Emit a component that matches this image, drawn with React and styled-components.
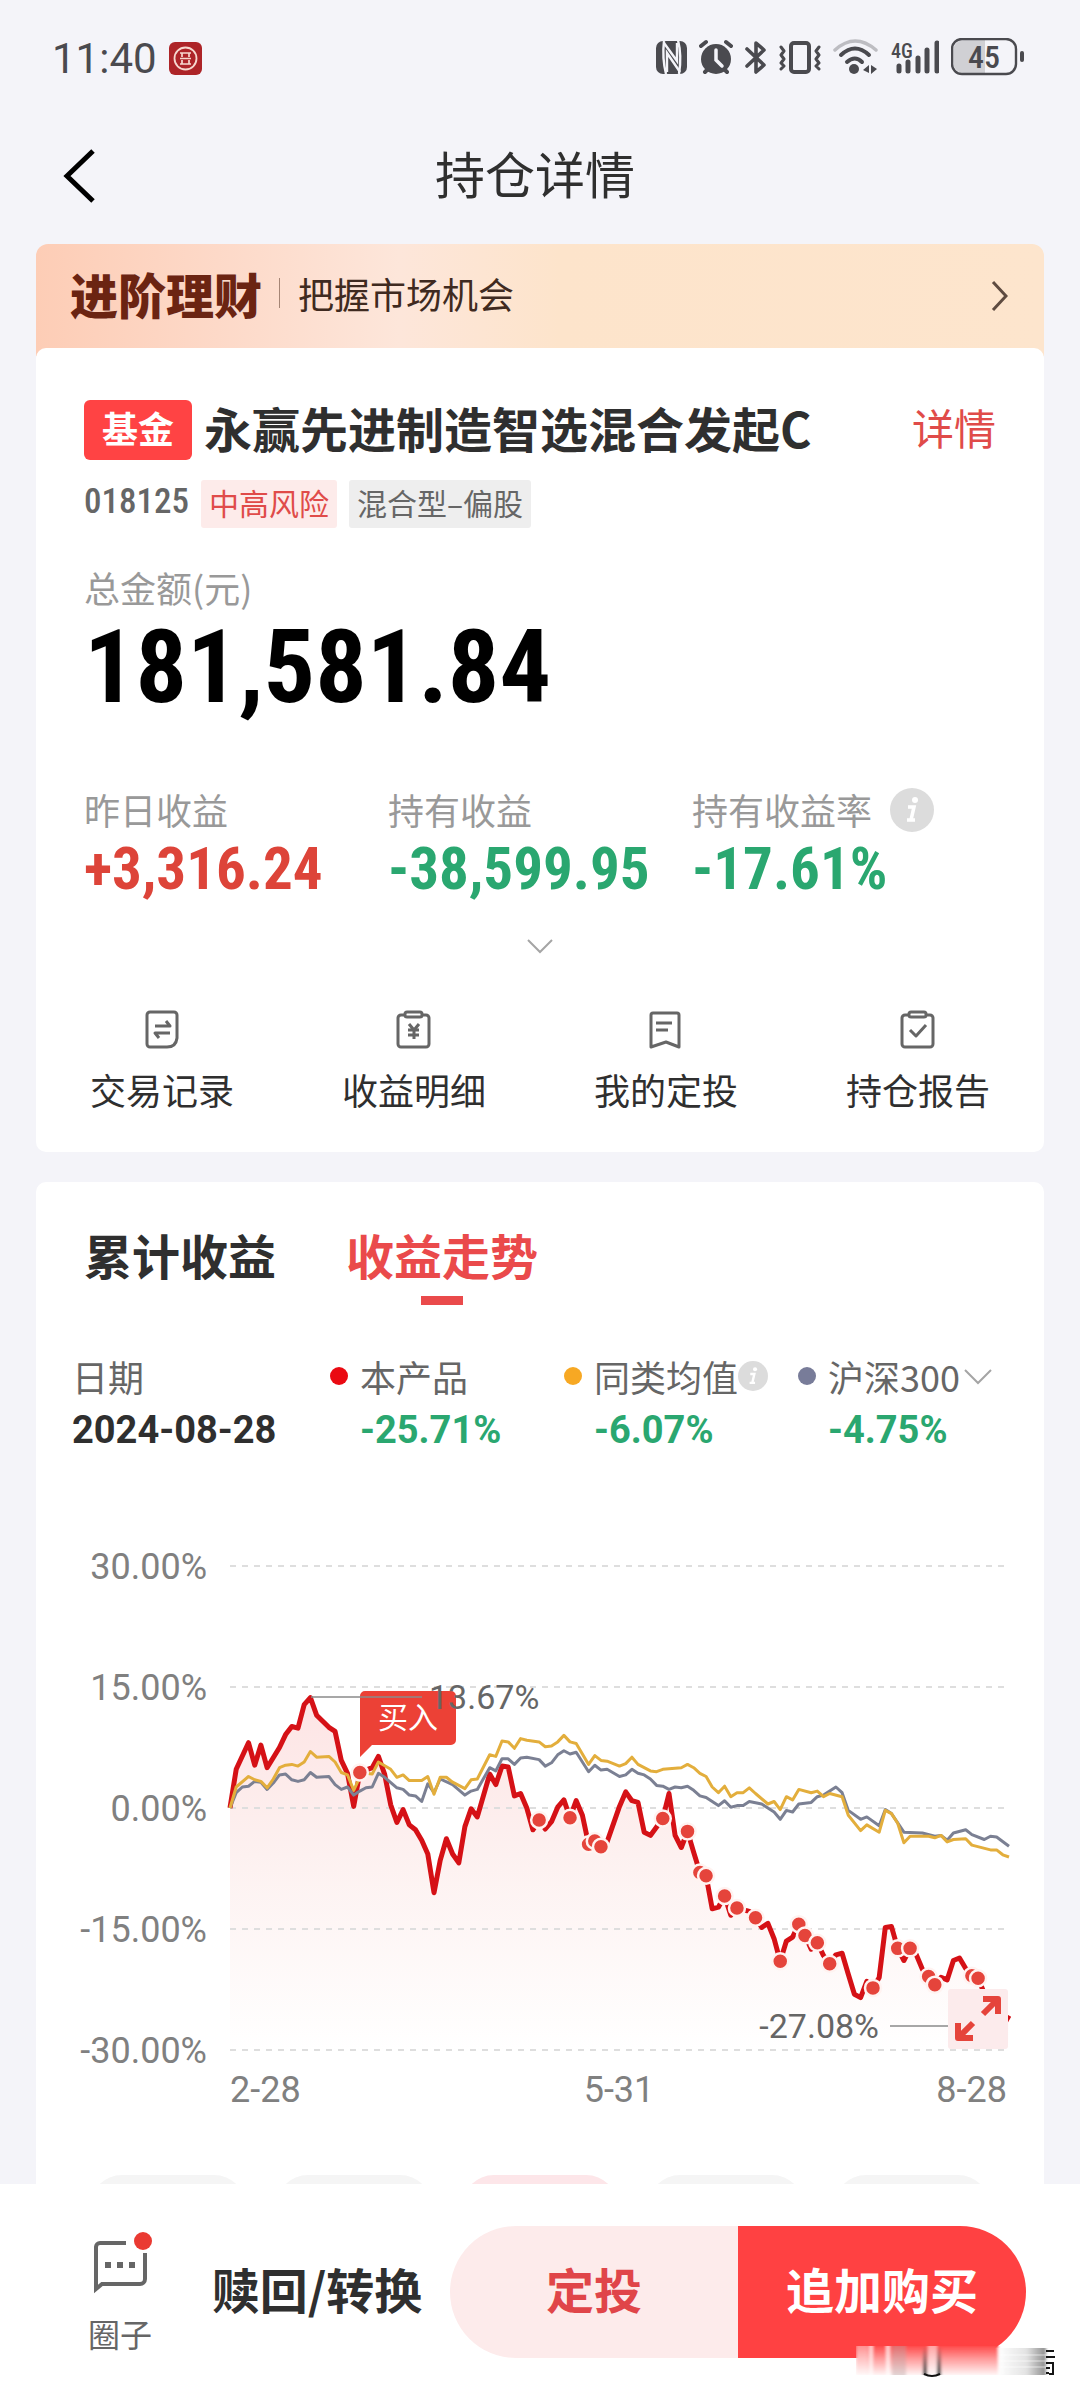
import React, { useState } from 'react';
import styled, { createGlobalStyle } from 'styled-components';

// DATA
const STATS = [
	{ label: '昨日收益', value: '+3,316.24', color: '#dd4439' },
	{ label: '持有收益', value: '-38,599.95', color: '#2aa770' },
	{ label: '持有收益率', value: '-17.61%', color: '#2aa770', info: true },
];

const TABS = ['累计收益', '收益走势'];

const LAST_DAY = 126;

// [trading day, percent]
const PRODUCT = [
	[0, 0], [1, 4.8], [3, 8.1], [4, 5.3], [5, 7.8], [6, 5], [8, 7.5], [9, 9.1],
	[10, 10.1], [11, 9.9], [12, 12.8], [13, 13.67], [14, 11.5], [16, 10],
	[17, 9.5], [18, 5.9], [19, 4.3], [20, 0.2], [21, 4.4], [23, 5], [24, 6.4],
	[25, 4.2], [26, 0.4], [27, -1.8], [28, -0.2], [29, -2.1], [30, -2.7],
	[31, -4], [32, -5.7], [33, -10.5], [34, -6.5], [35, -3.8], [36, -5.7],
	[37, -6.8], [38, -2.3], [39, -0.1], [40, -1.1], [42, 4.2], [43, 2.9],
	[44, 5.2], [45, 5.1], [46, 1.5], [47, 1.8], [48, 0], [49, -2.7],
	[50, -1.5], [51, -2.6], [52, -1.7], [53, 0.1], [54, 1], [55, -1.2],
	[56, 0.9], [57, -0.9], [58, -4.5], [59, -4.1], [60, -4.8], [61, -4.2],
	[63, 0.2], [64, 2], [65, 0.9], [66, 0.7], [67, -3], [68, -3.4],
	[70, -1.3], [71, 1.8], [72, -3.4], [73, -4.9], [74, -2.9], [75, -5.5],
	[76, -8], [77, -8.4], [78, -12.5], [79, -12.3], [80, -10.9], [81, -13.3],
	[82, -12.4], [84, -12.8], [85, -13.6], [86, -14.8], [87, -14.3],
	[88, -16.2], [89, -19], [90, -16.5], [91, -16], [92, -14.4], [93, -15.8],
	[94, -17.5], [95, -16.7], [96, -18.3], [97, -19.3], [98, -18.2],
	[99, -18], [100, -20.6], [101, -23.1], [102, -23.5], [103, -21.5],
	[104, -22.3], [105, -21], [106, -14.8], [107, -14.7], [108, -17.4],
	[109, -18.9], [110, -17.4], [111, -18.2], [112, -20], [113, -20.9],
	[114, -21.9], [115, -21], [116, -21.3], [117, -18.9], [118, -18.6],
	[119, -19.9], [120, -20.8], [121, -21.1], [122, -23], [123, -24.5],
	[124, -25.5], [125, -27.08], [126, -25.71],
];

const AVERAGE = [
	[0, 0], [1, 2.6], [3, 3.9], [4, 3.5], [5, 3.3], [6, 2.5], [7, 3.6], [8, 5],
	[9, 5.3], [10, 5.4], [11, 5.2], [12, 5.7], [13, 7], [14, 6.3], [16, 6.4],
	[17, 5.7], [18, 4.4], [19, 4.1], [20, 2.2], [21, 3.8], [22, 4.3],
	[23, 4.2], [24, 5.7], [26, 4.8], [27, 3.8], [28, 4.1], [29, 3.4],
	[31, 3.4], [32, 3.9], [33, 1.7], [34, 3.8], [35, 3.8], [36, 3.2],
	[37, 2.8], [38, 2.4], [39, 3.5], [40, 3.6], [42, 6.6], [43, 6.4],
	[44, 8.3], [45, 8.2], [46, 7.4], [47, 8.6], [48, 8.4], [50, 8.2],
	[51, 7.6], [52, 7.7], [53, 8.2], [54, 9], [55, 8.2], [56, 8], [58, 5.4],
	[59, 6.5], [60, 5.9], [61, 5.8], [63, 5.2], [64, 5.5], [65, 6.3],
	[66, 5.4], [68, 4.6], [69, 4.5], [70, 4.8], [73, 5], [74, 5.4], [75, 5],
	[76, 4.3], [77, 3.9], [78, 2.6], [79, 1.9], [80, 2.7], [81, 1.4],
	[82, 1.9], [83, 1.9], [84, 2.5], [85, 1.8], [87, 0.5], [88, 0.8],
	[89, -0.2], [90, 1.4], [91, 1], [92, 2.3], [94, 1.9], [95, 2.1],
	[96, 1.4], [97, 1.8], [99, 1.4], [100, -0.9], [102, -2.8], [103, -2.1],
	[105, -3], [106, -0.3], [107, -0.7], [108, -1.9], [109, -4.3],
	[110, -3.5], [113, -3.5], [114, -3.7], [115, -3.4], [116, -4.2],
	[117, -3.9], [119, -3.8], [120, -4.6], [123, -5.2], [124, -5.2],
	[125, -5.8], [126, -6.07],
];

const CSI300 = [
	[0, 0], [1, 1.9], [2, 2.6], [3, 2.7], [4, 3.3], [5, 3.2], [6, 2.3],
	[7, 3.1], [8, 4.1], [9, 4.2], [10, 3.5], [11, 3.3], [12, 3.5], [13, 4.4],
	[14, 3.8], [16, 3.9], [17, 2.9], [18, 2.3], [19, 2.6], [20, 1.6],
	[21, 2.1], [22, 2.5], [23, 2.6], [24, 4.3], [25, 3.8], [27, 2.5],
	[28, 2.3], [29, 1.6], [30, 1.5], [31, 0.8], [32, 3], [33, 1.9],
	[34, 3.6], [36, 2.9], [38, 1.6], [39, 2.1], [40, 2.3], [42, 5],
	[43, 4.6], [44, 6.1], [45, 6.1], [46, 5.4], [47, 6.2], [48, 6.3],
	[50, 6], [51, 5.2], [52, 5.6], [53, 6.6], [54, 7.1], [55, 6.7],
	[56, 6.9], [58, 4.5], [59, 5.3], [60, 4.7], [61, 4.8], [63, 3.9],
	[64, 4.1], [65, 4.8], [66, 4.3], [67, 4.1], [68, 3.6], [69, 2.8],
	[70, 2.7], [71, 2.3], [72, 2.6], [73, 2.5], [74, 2.7], [75, 2.2],
	[76, 1.5], [77, 1.3], [79, 0.3], [80, 0.9], [81, 0.1], [82, 0.3],
	[83, 0.3], [84, 0.8], [86, 0.5], [88, -0.5], [89, -1.4], [90, -0.3],
	[91, -0.5], [92, 0.5], [94, 0.7], [95, 1.4], [96, 1.6], [98, 2.6],
	[99, 1.9], [100, -0.3], [102, -1.4], [103, -1.1], [105, -2.2],
	[106, -0.2], [107, -0.7], [109, -3], [112, -3.1], [114, -3.5],
	[115, -3.4], [116, -4], [117, -3.1], [119, -2.7], [120, -3.3],
	[122, -3.9], [123, -3.5], [124, -3.6], [126, -4.75],
];

const BUY_DAYS = [
	21, 50, 55, 58, 59, 60, 70, 74, 76, 77, 80, 82, 85, 89, 92, 93, 95, 97,
	104, 108, 110, 113, 114, 120, 121,
];

const GRID = [30, 15, 0, -15, -30];

const LEFT = 194;
const RIGHT = 973;
const toX = (day) => LEFT + (day / LAST_DAY) * (RIGHT - LEFT);
const toY = (pct) => 308 - (pct * 121) / 15;
const toPoints = (series) =>
	series.map(([d, p]) => `${toX(d).toFixed(1)},${toY(p).toFixed(1)}`).join(' ');

// ICONS
const INK = '#4a4a4f';

function StatusIcons() {
	return (
		<StatusGroup>
			<svg width="31" height="40" viewBox="0 0 31 40">
				<rect y="3" width="31" height="33" rx="7" fill={INK} />
				<g fill="none" stroke="#f4f4f9" strokeWidth="2.4">
					<path d="M8 3Q6 20 10 36" />
					<path d="M8 5L21 23V5" />
					<path d="M11 34V15l13 19" />
					<path d="M22 2q4 16 1 34" />
				</g>
			</svg>
			<svg width="34" height="40" viewBox="0 0 34 40">
				<circle cx="17" cy="21" r="15" fill={INK} />
				<path d="M2 8l5-4M32 8l-5-4M6 34l4-4M28 34l-4-4" stroke={INK} strokeWidth="4" strokeLinecap="round" />
				<path d="M17 12v10l6 6" fill="none" stroke="#f4f4f9" strokeWidth="3.5" strokeLinecap="round" />
			</svg>
			<svg width="22" height="40" viewBox="0 0 22 40">
				<path d="M2 11l17 16-8 7V5l8 7L2 28" fill="none" stroke={INK} strokeWidth="3.6" strokeLinecap="round" strokeLinejoin="round" />
			</svg>
			<svg width="42" height="40" viewBox="0 0 42 40" fill="none" stroke={INK} strokeLinecap="round" strokeLinejoin="round">
				<rect x="12" y="5" width="18" height="29" rx="3" strokeWidth="4" />
				<path d="M2 9l3 4-3 4 3 4-3 4 3 3-3 3M40 9l-3 4 3 4-3 4 3 4-3 3 3 3" strokeWidth="3" />
			</svg>
			<svg width="45" height="40" viewBox="0 0 45 40" fill="none" strokeLinecap="round">
				<path d="M2 12Q22-6 43 12" stroke="#bdbdc2" strokeWidth="3.5" />
				<path d="M8 17Q22 4 36 17M14 24q8-7 15 0" stroke={INK} strokeWidth="4" />
				<circle cx="21" cy="31" r="5" fill={INK} />
				<path d="M36 27v8l-6-3zM38 27v9l6-5z" fill={INK} />
			</svg>
			<svg width="49" height="40" viewBox="0 0 49 40">
				<StatusText x="1" y="20" $size={20}>4G</StatusText>
				<path d="M9 28v5M18 24v9M28 20v13M37 12v21M47 5v28" stroke={INK} strokeWidth="5" strokeLinecap="round" />
			</svg>
			<svg width="73" height="40" viewBox="0 0 73 40">
				<path d="M34 2H13A11 11 0 0 0 2 13v11a11 11 0 0 0 11 11h21z" fill="#d0d0d4" />
				<rect x="1" y="1" width="64" height="35" rx="10" fill="none" stroke={INK} strokeWidth="2.4" />
				<rect x="69" y="13" width="4" height="11" rx="2" fill={INK} />
				<StatusText x="33" y="30" textAnchor="middle" $size={32}>45</StatusText>
			</svg>
		</StatusGroup>
	);
}

function BankLogo() {
	return (
		<svg width="33" height="33" viewBox="0 0 33 33">
			<rect width="33" height="33" rx="6" fill="#ad2428" />
			<circle cx="16.5" cy="16.5" r="11" fill="none" stroke="#f6d8cf" strokeWidth="1.8" />
			<path d="M11 11h11M11 22h11M11 16.5h11M13 11v4M20 11v4M13 18v4M20 18v4" fill="none" stroke="#f6d8cf" strokeWidth="1.7" />
		</svg>
	);
}

function InfoIcon({ size }) {
	return (
		<svg width={size} height={size} viewBox="0 0 44 44">
			<circle cx="22" cy="22" r="22" fill="#dcdcdc" />
			<circle cx="25" cy="12" r="3" fill="#fff" />
			<path d="M18 19h6l-3 13m-4 0h8" fill="none" stroke="#fff" strokeWidth="3.5" />
		</svg>
	);
}

function Chevron({ d, width, height, color, weight }) {
	return (
		<svg width={width} height={height} viewBox={`0 0 ${width} ${height}`}>
			<path d={d} fill="none" stroke={color} strokeWidth={weight} />
		</svg>
	);
}

const ACTIONS = [
	{
		label: '交易记录',
		icon: (
			<>
				<path d="M10 4h24a3 3 0 0 1 3 3v23q-1 9-10 9H10a3 3 0 0 1-3-3V7a3 3 0 0 1 3-3z" />
				<path d="M15 18h15l-4-5M30 25H15l4 5" />
			</>
		),
	},
	{
		label: '收益明细',
		icon: (
			<>
				<path d="M13 7H9a3 3 0 0 0-3 3v26a3 3 0 0 0 3 3h25a3 3 0 0 0 3-3V10a3 3 0 0 0-3-3h-4" />
				<rect x="13" y="4" width="17" height="5" rx="2" />
				<path d="M17 16l5 6 5-6M22 22v9M16 22h11M16 27h11" />
			</>
		),
	},
	{
		label: '我的定投',
		icon: (
			<>
				<path d="M9 5h24a2 2 0 0 1 2 2v32l-13-5-15 5V7a2 2 0 0 1 2-2z" />
				<path d="M12 15h16M12 22h12" />
			</>
		),
	},
	{
		label: '持仓报告',
		icon: (
			<>
				<path d="M13 7H9a3 3 0 0 0-3 3v26a3 3 0 0 0 3 3h25a3 3 0 0 0 3-3V10a3 3 0 0 0-3-3h-4" />
				<rect x="13" y="4" width="17" height="5" rx="2" />
				<path d="M14 22l6 6 10-11" />
			</>
		),
	},
];

function TrendChart() {
	const product = toPoints(PRODUCT);
	const values = new Map(PRODUCT);

	return (
		<ChartSvg viewBox="0 0 1008 620">
			<defs>
				<linearGradient id="area" x1="0" y1="196" x2="0" y2="550" gradientUnits="userSpaceOnUse">
					<stop offset="0" stopColor="#fde4e4" />
					<stop offset="0.45" stopColor="#fdf1f0" />
					<stop offset="1" stopColor="#ffffff" />
				</linearGradient>
			</defs>
			<polygon points={`${LEFT},550 ${product} ${RIGHT},550`} fill="url(#area)" />
			{GRID.map((pct) => (
				<g key={pct}>
					<line x1={LEFT} x2={RIGHT - 3} y1={toY(pct)} y2={toY(pct)} stroke="#dedede" strokeWidth="2" strokeDasharray="6 6" />
					<AxisText x="171" y={toY(pct) + 13} textAnchor="end">
						{`${pct.toFixed(2)}%`}
					</AxisText>
				</g>
			))}
			<AxisText x="194" y="602">2-28</AxisText>
			<AxisText x="583" y="602" textAnchor="middle">5-31</AxisText>
			<AxisText x="971" y="602" textAnchor="end">8-28</AxisText>

			<Series points={product} stroke="#d51116" $width={5} />
			<Series points={toPoints(CSI300)} stroke="#7b8093" $width={3} />
			<Series points={toPoints(AVERAGE)} stroke="#e3ae3c" $width={3} />
			{BUY_DAYS.map((day) => (
				<circle key={day} cx={toX(day)} cy={toY(values.get(day))} r="8" fill="#e5443b" stroke="#fff3f1" strokeWidth="2.5" />
			))}

			{/* buy marker */}
			<path d="M324 257V196a5 5 0 0 1 5-5h86a5 5 0 0 1 5 5v44a5 5 0 0 1-5 5h-79z" fill="#ec4136" />
			<BuyText x="372" y="228" textAnchor="middle">买入</BuyText>

			{/* high and low */}
			<path d="M275 197h111M854 526h58" stroke="#8b8b8b" strokeWidth="1.5" />
			<PeakText x="393" y="209">13.67%</PeakText>
			<PeakText x="843" y="538" textAnchor="end">-27.08%</PeakText>

			{/* fullscreen */}
			<rect x="912" y="489" width="60" height="60" rx="3" fill="#fcebec" />
			<path d="M947 514l15-15M947 499h15v15M937 523l-15 15M922 523v15h15" fill="none" stroke="#e5443b" strokeWidth="6" strokeLinejoin="round" />
		</ChartSvg>
	);
}

function App() {
	const [activeTab, setActiveTab] = useState(TABS[1]);

	return (
		<Page>
			<GlobalStyle />
			<StatusBar>
				<Clock>11:40</Clock>
				<BankLogo />
				<StatusIcons />
			</StatusBar>
			<Header>
				<BackButton type="button">
					<Chevron d="M33 3L7 28l26 25" width={36} height={56} color="#000" weight={5} />
				</BackButton>
				<PageTitle>持仓详情</PageTitle>
			</Header>

			<Content>
				<Banner href="#">
					<BannerTitle>进阶理财</BannerTitle>
					<BannerText>把握市场机会</BannerText>
					<Chevron d="M3 2l13 14L3 30" width={18} height={32} color="#5e4b40" weight={3} />
				</Banner>

				<HoldingCard>
					<FundRow>
						<FundBadge>基金</FundBadge>
						<FundName>永赢先进制造智选混合发起C</FundName>
						<DetailLink href="#">详情</DetailLink>
					</FundRow>
					<TagRow>
						<FundCode>018125</FundCode>
						<Tag $risk>中高风险</Tag>
						<Tag>混合型–偏股</Tag>
					</TagRow>
					<Label $top={38}>总金额(元)</Label>
					<Amount>181,581.84</Amount>
					<StatGrid>
						{STATS.map((stat) => (
							<div key={stat.label}>
								<Label>
									{stat.label}
									{stat.info && <InfoIcon size={44} />}
								</Label>
								<StatValue $color={stat.color}>{stat.value}</StatValue>
							</div>
						))}
					</StatGrid>
					<MoreButton type="button">
						<Chevron d="M1 2l12 12L25 2" width={26} height={16} color="#a5a5a5" weight={2} />
					</MoreButton>
					<ActionGrid>
						{ACTIONS.map((action) => (
							<ActionButton key={action.label} type="button">
								<ActionIcon viewBox="0 0 44 44">{action.icon}</ActionIcon>
								{action.label}
							</ActionButton>
						))}
					</ActionGrid>
				</HoldingCard>

				<TrendCard>
					<Tabs>
						{TABS.map((tab) => (
							<Tab key={tab} type="button" $active={tab === activeTab} onClick={() => setActiveTab(tab)}>
								{tab}
							</Tab>
						))}
					</Tabs>
					<Legend>
						<LegendItem>
							<LegendLabel as="span">日期</LegendLabel>
							<LegendValue $color="#2f2f2f">2024-08-28</LegendValue>
						</LegendItem>
						<LegendItem>
							<LegendLabel as="span">
								<Dot $color="#ea0a12" />
								本产品
							</LegendLabel>
							<LegendValue $indent>-25.71%</LegendValue>
						</LegendItem>
						<LegendItem>
							<LegendLabel as="span">
								<Dot $color="#f7a823" />
								同类均值
								<InfoIcon size={30} />
							</LegendLabel>
							<LegendValue $indent>-6.07%</LegendValue>
						</LegendItem>
						<LegendItem>
							<LegendLabel htmlFor="benchmark">
								<Dot $color="#787c99" />
								<BenchmarkSelect id="benchmark">
									<option>沪深300</option>
								</BenchmarkSelect>
								<Chevron d="M1 2l13 13L27 2" width={28} height={17} color="#a5a5a5" weight={2} />
							</LegendLabel>
							<LegendValue $indent>-4.75%</LegendValue>
						</LegendItem>
					</Legend>
					<TrendChart />
					<PeriodRow>
						<Period />
						<Period />
						<Period $active />
						<Period />
						<Period />
					</PeriodRow>
				</TrendCard>
			</Content>

			<BottomBar>
				<CircleButton type="button">
					<svg width="64" height="64" viewBox="0 0 64 64">
						<path d="M38 11H12a4 4 0 0 0-4 4v42l6-5h38a5 5 0 0 0 5-5V21" fill="none" stroke="#666" strokeWidth="4" />
						<path d="M17 30h6v6h-6zM29 30h6v6h-6zM41 30h6v6h-6z" fill="#666" />
						<circle cx="55" cy="9" r="9" fill="#ea3a32" />
					</svg>
					圈子
				</CircleButton>
				<RedeemButton type="button">赎回/转换</RedeemButton>
				<PayGroup>
					<PayButton type="button">定投</PayButton>
					<PayButton type="button" $primary>
						追加购买
					</PayButton>
				</PayGroup>
				<Smudge viewBox="0 0 204 36">
					<defs>
						<linearGradient id="fade" x1="0" y1="0" x2="0" y2="1">
							<stop offset="0" stopColor="#ff4b4b" />
							<stop offset="0.45" stopColor="#ff9c9c" />
							<stop offset="1" stopColor="#fff5f5" />
						</linearGradient>
						<linearGradient id="grey" x1="0" y1="0" x2="1" y2="0">
							<stop offset="0" stopColor="#fff" />
							<stop offset="0.6" stopColor="#e2e2e2" />
							<stop offset="1" stopColor="#8c8c8c" />
						</linearGradient>
						<linearGradient id="ends" x1="0" y1="0" x2="0" y2="1">
							<stop offset="0" stopColor="#333" stopOpacity="0" />
							<stop offset="1" stopColor="#222" />
						</linearGradient>
						<filter id="soft" x="-5%" y="-5%" width="110%" height="110%">
							<feGaussianBlur stdDeviation="1.5 0.5" />
						</filter>
					</defs>
					<g filter="url(#soft)">
						<rect y="2" width="142" height="29" fill="url(#fade)" />
						<rect y="2" width="12" height="29" fill="#fff" opacity="0.4" />
						<rect x="36" y="2" width="14" height="29" fill="#b9a6a6" opacity="0.4" />
						<path d="M15 2v29M32 2v29" stroke="#fff" strokeWidth="4" opacity="0.7" />
						<rect x="142" y="4" width="48" height="27" fill="url(#grey)" />
						<path d="M142 11h48M142 17h48M142 23h48" stroke="#fff" strokeWidth="1.5" opacity="0.4" />
						<rect x="72" y="2" width="9" height="29" fill="#fff" opacity="0.5" />
						<rect x="67" y="2" width="4" height="29" fill="url(#ends)" />
						<rect x="81" y="2" width="4" height="29" fill="url(#ends)" />
					</g>
					<path d="M68 30q8 4 16 0" fill="none" stroke="#111" strokeWidth="2" />
					<path d="M190 7h8M190 13h9M190 19h7v11h-4M190 24h4M190 29h3" fill="none" stroke="#151515" strokeWidth="2" />
				</Smudge>
			</BottomBar>
		</Page>
	);
}

export default App;

// STYLES
const GlobalStyle = createGlobalStyle`
	* {
		box-sizing: border-box;
	}

	body {
		margin: 0;
		background-color: #f4f4f9;
		color: #2f2f2f;
		font-family: 'Noto Sans CJK SC', sans-serif;
		font-size: 36px;
	}

	button,
	select {
		margin: 0;
		padding: 0;
		border: 0;
		background: none;
		color: inherit;
		font: inherit;
		cursor: pointer;
	}

	a {
		color: inherit;
		text-decoration: none;
	}

	svg {
		display: block;
		flex-shrink: 0;
	}
`;

const Page = styled.div`
	display: flex;
	flex-direction: column;
	height: 100vh;
`;

const StatusBar = styled.div`
	display: flex;
	flex-shrink: 0;
	align-items: center;
	gap: 12px;
	height: 116px;
	padding: 0 56px 0 52px;
`;

const Clock = styled.span`
	font-family: Roboto, sans-serif;
	font-size: 42px;
	color: #4a4a4f;
`;

const StatusGroup = styled.div`
	display: flex;
	align-items: center;
	gap: 12px;
	margin-left: auto;
`;

const StatusText = styled.text`
	fill: ${INK};
	font-family: 'Roboto Condensed', Roboto, sans-serif;
	font-size: ${({ $size }) => $size}px;
	font-weight: 500;
`;

const Header = styled.header`
	display: grid;
	flex-shrink: 0;
	grid-template-columns: 80px 1fr 90px;
	align-items: center;
	height: 120px;
	padding: 0 60px;
`;

const BackButton = styled.button`
	justify-self: start;
`;

const PageTitle = styled.h1`
	margin: 0;
	padding-bottom: 8px;
	font-size: 50px;
	font-weight: 400;
	line-height: 72px;
	text-align: center;
`;

const Content = styled.main`
	flex: 1;
	min-height: 0;
	padding: 8px 36px 0;
	overflow-y: auto;
	scrollbar-width: none;
`;

const Banner = styled.a`
	display: flex;
	align-items: center;
	height: 112px;
	padding: 0 36px 8px 34px;
	border-radius: 12px 12px 0 0;
	background: linear-gradient(90deg, #fdcdb6 0%, #fdd9c8 18%, #fde6da 36%, #fde4cb 52%, #fde5cd 100%);

	svg {
		margin-left: auto;
	}
`;

const BannerTitle = styled.strong`
	padding: 0 17px 6px 0;
	font-size: 48px;
	font-weight: 900;
	color: #6b2412;
`;

const BannerText = styled.span`
	display: flex;
	align-items: center;
	gap: 18px;
	padding-bottom: 6px;
	font-size: 36px;
	color: #3f2a20;

	&::before {
		content: '';
		width: 1px;
		height: 30px;
		background-color: #a58575;
	}
`;

const Card = styled.section`
	border-radius: 10px;
	background-color: #fff;
`;

const HoldingCard = styled(Card)`
	position: relative;
	margin-top: -8px;
	padding: 52px 48px 36px;
`;

const TrendCard = styled(Card)`
	margin-top: 30px;
	padding-top: 44px;
`;

const FundRow = styled.div`
	display: flex;
	height: 60px;
	line-height: 54px;
`;

const FundBadge = styled.span`
	padding: 0 18px;
	border-radius: 6px;
	background-color: #ff4344;
	color: #fff;
	font-size: 36px;
	font-weight: 700;
`;

const FundName = styled.h2`
	margin: 0 0 0 12px;
	font-size: 48px;
	font-weight: 700;
	white-space: nowrap;
`;

const DetailLink = styled.a`
	margin-left: auto;
	font-size: 42px;
	color: #e04b49;
`;

const TagRow = styled.div`
	display: flex;
	gap: 12px;
	height: 48px;
	margin-top: 20px;
	line-height: 44px;
`;

const FundCode = styled.span`
	font-family: 'Roboto Condensed', Roboto, sans-serif;
	font-size: 35px;
	font-weight: 500;
	color: #666;
`;

const Tag = styled.span`
	padding: 0 8px;
	border-radius: 3px;
	background-color: ${({ $risk }) => ($risk ? '#fdebea' : '#eeeeee')};
	color: ${({ $risk }) => ($risk ? '#e04b49' : '#666')};
	font-size: 30px;
`;

const Label = styled.div`
	display: flex;
	align-items: flex-start;
	gap: 18px;
	height: 48px;
	margin-top: ${({ $top }) => $top || 0}px;
	color: #999;
	font-size: 36px;
	line-height: 42px;
	white-space: nowrap;
`;

const Amount = styled.div`
	font-family: 'Roboto Condensed', Roboto, sans-serif;
	font-size: 102px;
	font-weight: 700;
	line-height: 106px;
	color: #000;
`;

const StatGrid = styled.div`
	display: grid;
	grid-template-columns: repeat(3, 1fr);
	margin-top: 68px;
`;

const StatValue = styled.div`
	color: ${({ $color }) => $color};
	font-family: 'Roboto Condensed', Roboto, sans-serif;
	font-size: 59px;
	font-weight: 700;
	line-height: 66px;
	white-space: nowrap;
`;

const MoreButton = styled.button`
	display: flex;
	align-items: center;
	justify-content: center;
	width: 100%;
	height: 64px;
	margin-top: 12px;
`;

const ActionGrid = styled.div`
	display: grid;
	grid-template-columns: repeat(4, 1fr);
	margin: 30px -48px 0;
`;

const ActionButton = styled.button`
	display: flex;
	flex-direction: column;
	align-items: center;
	gap: 13px;
	padding-bottom: 3px;
	line-height: 48px;
`;

const ActionIcon = styled.svg`
	width: 44px;
	height: 44px;
	fill: none;
	stroke: #666;
	stroke-width: 3;
	stroke-linejoin: round;
`;

const Tabs = styled.div`
	display: flex;
	gap: 70px;
	padding: 0 48px;
`;

const Tab = styled.button`
	display: flex;
	flex-direction: column;
	align-items: center;
	gap: 14px;
	font-size: 48px;
	font-weight: 700;
	line-height: 56px;
	color: ${({ $active }) => ($active ? '#ea4a4b' : '#2f2f2f')};

	&::after {
		content: '';
		width: 42px;
		height: 9px;
		background-color: ${({ $active }) => ($active ? '#ea4a4b' : 'transparent')};
	}
`;

const Legend = styled.div`
	display: grid;
	grid-template-columns: 258fr 234fr 234fr 246fr;
	margin-top: 47px;
	padding-left: 36px;
`;

const LegendItem = styled.div`
	white-space: nowrap;
`;

const LegendLabel = styled.label`
	display: flex;
	align-items: center;
	height: 48px;
	color: #666;
	font-size: 36px;
`;

const LegendValue = styled.div`
	padding-left: ${({ $indent }) => ($indent ? 30 : 0)}px;
	color: ${({ $color }) => $color || '#2aa770'};
	font-family: Roboto, sans-serif;
	font-size: 38px;
	font-weight: 700;
	line-height: 60px;
`;

const Dot = styled.i`
	width: 18px;
	height: 18px;
	margin-right: 12px;
	border-radius: 50%;
	background-color: ${({ $color }) => $color};
`;

const BenchmarkSelect = styled.select`
	margin-right: 4px;
	appearance: none;
`;

const ChartSvg = styled.svg`
	width: 100%;
	height: auto;
	margin-top: 40px;
`;

const AxisText = styled.text`
	fill: #808080;
	font-family: Roboto, sans-serif;
	font-size: 36px;
`;

const PeakText = styled(AxisText)`
	fill: #666;
	font-size: 34px;
`;

const BuyText = styled.text`
	fill: #fff;
	font-size: 30px;
`;

const Series = styled.polyline`
	fill: none;
	stroke-width: ${({ $width }) => $width};
	stroke-linejoin: round;
`;

const PeriodRow = styled.div`
	display: grid;
	grid-template-columns: repeat(5, 1fr);
	gap: 30px;
	margin-top: 55px;
	padding: 0 54px;
`;

const Period = styled.span`
	height: 64px;
	border-radius: 32px;
	background-color: ${({ $active }) => ($active ? '#fde6e9' : '#f5f5f5')};
`;

const BottomBar = styled.footer`
	position: relative;
	display: flex;
	flex-shrink: 0;
	align-items: flex-start;
	height: 216px;
	padding: 42px 54px 0 56px;
	background-color: #fff;
`;

const CircleButton = styled.button`
	display: flex;
	flex-direction: column;
	align-items: center;
	gap: 17px;
	width: 128px;
	padding-top: 6px;
	color: #666;
	font-size: 32px;
	line-height: 40px;
`;

const RedeemButton = styled.button`
	flex: 1;
	padding-bottom: 8px;
	font-size: 48px;
	font-weight: 700;
	line-height: 124px;
	white-space: nowrap;
`;

const PayGroup = styled.div`
	display: flex;
	flex: 0 1 576px;
	overflow: hidden;
	border-radius: 66px;
`;

const PayButton = styled.button`
	flex: 1;
	padding-bottom: 8px;
	background-color: ${({ $primary }) => ($primary ? '#ff4142' : '#fdebeb')};
	color: ${({ $primary }) => ($primary ? '#fff' : '#e04549')};
	font-size: 48px;
	font-weight: 700;
	line-height: 124px;
`;

const Smudge = styled.svg`
	position: absolute;
	right: 20px;
	bottom: 20px;
	width: 204px;
	height: 36px;
`;
